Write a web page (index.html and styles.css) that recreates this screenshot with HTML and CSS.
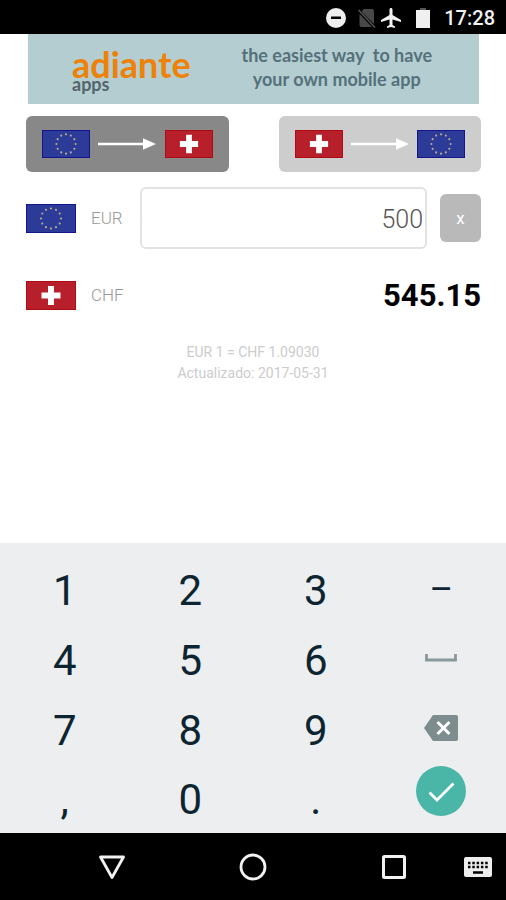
FILE: index.html
```html
<!DOCTYPE html>
<html lang="es">
<head>
<meta charset="utf-8">
<meta name="viewport" content="width=device-width, initial-scale=1">
<title>EUR / CHF</title>
<link rel="stylesheet" href="styles.css">
</head>
<body>
<svg class="defs" aria-hidden="true">
  <symbol id="eu" viewBox="0 0 50 29" preserveAspectRatio="none">
    <rect width="50" height="29" fill="#14148c"/>
    <rect x="1" y="1" width="48" height="27" fill="#2b3b97"/>
    <g fill="#b9ac8c">
      <circle cx="25" cy="4.500" r="1.100"/><circle cx="30" cy="5.800" r="1.100"/><circle cx="33.700" cy="9.500" r="1.100"/>
      <circle cx="35" cy="14.500" r="1.100"/><circle cx="33.700" cy="19.500" r="1.100"/><circle cx="30" cy="23.200" r="1.100"/>
      <circle cx="25" cy="24.500" r="1.100"/><circle cx="20" cy="23.200" r="1.100"/><circle cx="16.300" cy="19.500" r="1.100"/>
      <circle cx="15" cy="14.500" r="1.100"/><circle cx="16.300" cy="9.500" r="1.100"/><circle cx="20" cy="5.800" r="1.100"/>
    </g>
  </symbol>
  <symbol id="ch" viewBox="0 0 50 29" preserveAspectRatio="none">
    <rect width="50" height="29" fill="#ac0c14"/>
    <rect x="1" y="1" width="48" height="27" fill="#b71f2a"/>
    <path d="M22 5h6v6.500h6.500v6H28V24h-6v-6.500h-6.500v-6H22z" fill="#fff"/>
  </symbol>
  <symbol id="arrow" viewBox="0 0 58 12">
    <path d="M0 4.700h45V.3L58 6l-13 5.700V7.300H0z" fill="#fff"/>
  </symbol>
</svg>

<header class="status">
  <svg class="dnd" viewBox="0 0 20 20"><circle cx="10" cy="10" r="10" fill="#eee"/><path d="M5 8.500h10v2.500H5z" fill="#000"/></svg>
  <svg class="sim" viewBox="0 0 18 20"><path d="M6 1h8q2 0 2 2v13L3.500 3.500zM1.500 6 14 19H3.500q-2 0-2-2z" fill="#484848"/><path d="M.5 2 17 19.500" stroke="#555" stroke-width="1.500"/></svg>
  <svg class="plane" viewBox="2 2 20 20"><path d="M22 16v-2l-8.500-5V3.500C13.500 2.670 12.830 2 12 2s-1.500.67-1.500 1.500V9L2 14v2l8.500-2.500V19L8 20.500V22l4-1 4 1v-1.500L13.500 19v-5.500z" fill="#f2f2f2"/></svg>
  <svg class="battery" viewBox="0 0 14 20"><path d="M4 0h6v2H4z" fill="#555"/><path d="M0 2h14v18H0z" fill="#f0f0f0"/></svg>
  <time>17:28</time>
</header>

<main>
  <a class="banner" href="#">
    <span class="brand"><b>adiante</b><small>apps</small></span>
    <span class="slogan">the easiest way&nbsp; to have<br>your own mobile app</span>
  </a>

  <div class="directions">
    <button class="direction active" type="button" aria-label="EUR → CHF">
      <svg class="mini"><use href="#eu"/></svg><svg class="arrow"><use href="#arrow"/></svg><svg class="mini"><use href="#ch"/></svg>
    </button>
    <button class="direction" type="button" aria-label="CHF → EUR">
      <svg class="mini"><use href="#ch"/></svg><svg class="arrow"><use href="#arrow"/></svg><svg class="mini"><use href="#eu"/></svg>
    </button>
  </div>

  <div class="row source">
    <svg class="flag"><use href="#eu"/></svg>
    <label for="amount">EUR</label>
    <input id="amount" type="text" inputmode="decimal" value="500">
    <button class="clear" type="button">x</button>
  </div>
  <div class="row">
    <svg class="flag"><use href="#ch"/></svg>
    <span class="code">CHF</span>
    <output for="amount">545.15</output>
  </div>

  <p class="rate">EUR 1 = CHF 1.09030<br>Actualizado: 2017-05-31</p>
</main>

<section class="keypad">
  <button type="button">1</button><button type="button">2</button><button type="button">3</button><button class="minus" type="button">–</button>
  <button type="button">4</button><button type="button">5</button><button type="button">6</button>
  <button class="tool" type="button" aria-label="Espacio"><svg class="space" viewBox="0 0 32 8"><path d="M1.500 0v6h29V0" fill="none" stroke="#8b9899" stroke-width="2.800"/></svg></button>
  <button type="button">7</button><button type="button">8</button><button type="button">9</button>
  <button class="tool" type="button" aria-label="Borrar"><svg class="erase" viewBox="0 0 34 26"><path d="M9 0h23q2 0 2 2v22q0 2-2 2H9L0 13z" fill="#7d8c8d"/><path d="m13.500 7 12 12m0-12-12 12" stroke="#fff" stroke-width="3"/></svg></button>
  <button type="button">,</button><button type="button">0</button><button type="button">.</button>
  <button class="done" type="button" aria-label="Aceptar"><svg viewBox="0 0 50 50"><circle cx="25" cy="25" r="25" fill="#4ab6a8"/><path d="m13.500 26.500 7.500 7.500 16.500-16.500" fill="none" stroke="#fff" stroke-width="2.800"/></svg></button>
</section>

<nav class="navbar">
  <button class="back" type="button" aria-label="Atrás"><svg viewBox="0 0 28 28"><path d="M2.500 4h23L14 24.500z" fill="none" stroke="#f2f2f2" stroke-width="2.800" stroke-linejoin="round"/></svg></button>
  <button type="button" aria-label="Inicio"><svg viewBox="0 0 28 28"><circle cx="14" cy="14" r="12" fill="none" stroke="#f2f2f2" stroke-width="2.800"/></svg></button>
  <button type="button" aria-label="Recientes"><svg viewBox="0 0 28 28"><rect x="3.500" y="3.500" width="21" height="21" rx="1" fill="none" stroke="#f2f2f2" stroke-width="3"/></svg></button>
  <button class="ime" type="button" aria-label="Teclado"><svg viewBox="0 0 28 28"><rect y="4" width="28" height="20" rx="2" fill="#eee"/><path d="M4 10h20M4 14h20" stroke="#000" stroke-width="2.500" stroke-dasharray="2.500 1.800"/><path d="M9 19.500h10" stroke="#000" stroke-width="2.500"/></svg></button>
</nav>
</body>
</html>
```

FILE: styles.css
```css
* {
  box-sizing: border-box;
}

body {
  margin: 0;
  min-height: 100vh;
  display: flex;
  flex-direction: column;
  background: #fff;
  font-family: Roboto, "Liberation Sans", sans-serif;
}

button {
  margin: 0;
  padding: 0;
  border: 0;
  background: none;
  font: inherit;
  color: inherit;
}

svg {
  display: block;
}

.defs {
  position: absolute;
  width: 0;
  height: 0;
}

.status {
  height: 34px;
  padding: 2px 11px 0 0;
  display: flex;
  align-items: center;
  justify-content: flex-end;
  background: #000;
  color: #f2f2f2;
  font-size: 20px;
  font-weight: 500;
}

.dnd {
  width: 20px;
  height: 20px;
  margin-right: 12px;
}

.sim {
  width: 18px;
  height: 20px;
  margin-right: 5px;
}

.plane {
  width: 20px;
  height: 20px;
  margin-right: 15px;
}

.battery {
  width: 14px;
  height: 20px;
  margin-right: 14px;
}

main {
  flex: 1;
}

.banner {
  height: 70px;
  margin: 0 27px 0 28px;
  padding: 0 47px 0 44px;
  display: flex;
  justify-content: space-between;
  background: #b3cdd0;
  font-family: Lato, sans-serif;
  text-decoration: none;
}

.brand {
  display: flex;
  flex-direction: column;
  padding-top: 17px;
}

.brand b {
  color: #ee8208;
  font-size: 36px;
  line-height: 26px;
}

.brand small {
  color: #54656c;
  font-size: 18px;
  font-weight: 700;
  line-height: 14px;
}

.slogan {
  padding-top: 9px;
  color: #55717b;
  font-size: 18px;
  font-weight: 700;
  line-height: 24px;
  text-align: center;
}

.directions {
  display: flex;
  justify-content: space-between;
  gap: 50px;
  margin: 12px 25px 0 26px;
}

.direction {
  flex: 1;
  height: 56px;
  padding: 0 16px;
  display: flex;
  align-items: center;
  justify-content: space-between;
  border-radius: 6px;
  background: #cdcdcd;
}

.direction.active {
  background: #888;
}

.mini {
  width: 48px;
  height: 28px;
}

.arrow {
  width: 58px;
  height: 12px;
}

.row {
  height: 62px;
  margin: 15px 25px 0 26px;
  display: flex;
  align-items: center;
  color: #999;
  font-size: 17px;
  font-weight: 300;
}

.flag {
  width: 50px;
  height: 29px;
  flex: none;
}

.row label,
.code {
  width: 49px;
  margin-left: 15px;
  flex: none;
}

.row input {
  flex: 1;
  min-width: 0;
  height: 62px;
  padding: 2px 2px 0;
  border: 2px solid #e2e2e2;
  border-radius: 6px;
  background: #fff;
  color: #555;
  font: 300 25px Roboto, sans-serif;
  text-align: right;
}

.clear {
  width: 41px;
  height: 48px;
  margin-left: 13px;
  border-radius: 6px;
  background: #b9b9b9;
  color: #fff;
  font-weight: 400;
}

output {
  margin-left: auto;
  color: #000;
  font-size: 31px;
  font-weight: 700;
}

.rate {
  margin: 16px 0 0;
  color: #ccc;
  font-size: 14px;
  font-weight: 400;
  line-height: 21px;
  text-align: center;
}

.keypad {
  display: grid;
  grid-template-columns: repeat(4, 1fr);
  grid-template-rows: repeat(3, 70px) 68px;
  padding: 12px 2px 0;
  background: #eceef0;
  color: #0c2530;
  font-size: 42px;
}

.keypad button {
  display: grid;
  place-items: center;
}

.keypad .minus {
  font-size: 36px;
}

.keypad .tool {
  padding-bottom: 4px;
}

.space {
  width: 32px;
  height: 8px;
}

.erase {
  width: 34px;
  height: 26px;
}

.keypad .done {
  padding-bottom: 16px;
}

.done svg {
  width: 50px;
  height: 50px;
}

.navbar {
  height: 67px;
  display: grid;
  grid-template-columns: 42px repeat(3, 1fr) 42px;
  background: #000;
}

.navbar button {
  display: grid;
  place-items: center;
}

.navbar svg {
  width: 28px;
  height: 28px;
}

.navbar .back {
  grid-column: 2;
}

.navbar .ime {
  padding-right: 14px;
}
```
